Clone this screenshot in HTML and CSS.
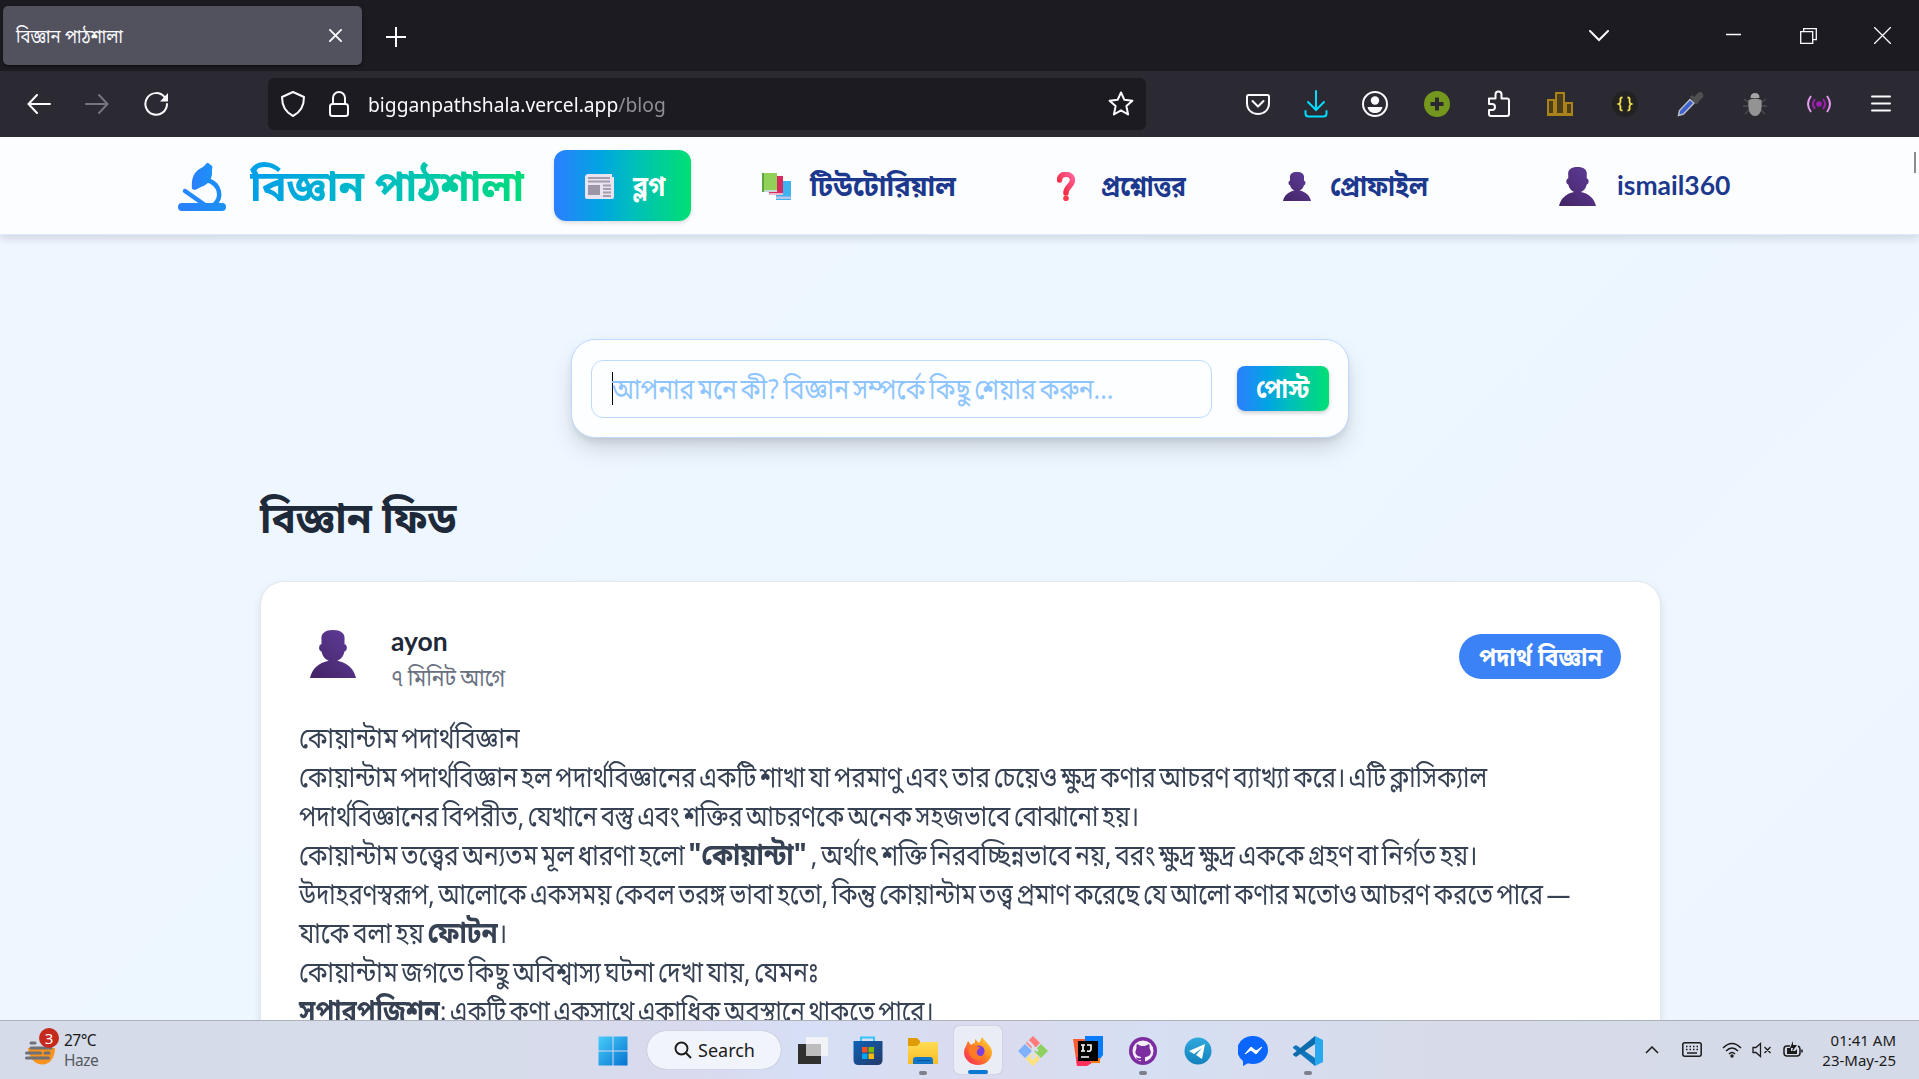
FILE: index.html
```html
<!DOCTYPE html>
<html lang="bn">
<head>
<meta charset="utf-8">
<title>বিজ্ঞান পাঠশালা</title>
<link rel="stylesheet" href="styles.css">
</head>
<body>
<svg class="defs" width="0" height="0">
  <defs>
    <linearGradient id="skin" x1="0" y1="1" x2="1" y2="0"><stop offset="0" stop-color="#432464"/><stop offset="1" stop-color="#613d9c"/></linearGradient>
    <linearGradient id="scope" x1="0" x2="1"><stop offset="0" stop-color="#2b7fff"/><stop offset="1" stop-color="#1b92f5"/></linearGradient>
    <linearGradient id="win" x1="0" y1="0" x2="1" y2="1"><stop offset="0" stop-color="#48cdfb"/><stop offset="1" stop-color="#0673d0"/></linearGradient>
    <linearGradient id="red" x1="0" y1="1" x2="1" y2="0"><stop offset="0" stop-color="#f0202f"/><stop offset="1" stop-color="#ff5f98"/></linearGradient>
    <linearGradient id="fold" x1="0" y1="0" x2="0" y2="1"><stop offset="0" stop-color="#ffdc55"/><stop offset="1" stop-color="#f9bd24"/></linearGradient>
    <linearGradient id="fox" x1="1" y1="0" x2="0" y2="1"><stop offset="0" stop-color="#ffe43b"/><stop offset=".45" stop-color="#ff8a20"/><stop offset="1" stop-color="#f6195f"/></linearGradient>
    <linearGradient id="store" x1="0" y1="0" x2="1" y2="1"><stop offset="0" stop-color="#0c62b8"/><stop offset="1" stop-color="#253a66"/></linearGradient>
    <linearGradient id="tele" x1="0" y1="0" x2="0" y2="1"><stop offset="0" stop-color="#2fa9dd"/><stop offset="1" stop-color="#1381bd"/></linearGradient>
    <symbol id="person" viewBox="0 0 44 47" preserveAspectRatio="none"><path d="M11 10C10 3 15 0 22 0s12 3 11 10v4c3 0 3 7 0 7-1 5-4 8-7 9 10 2 16 8 18 17H0c2-9 8-15 18-17-3-1-6-4-7-9-3 0-3-7 0-7z" fill="url(#skin)"/></symbol>
  </defs>
</svg>

<div class="tabs">
  <div class="tab"><span class="tab-name"><span class="fit">বিজ্ঞান পাঠশালা</span></span>
    <svg width="13" height="13" viewBox="0 0 14 14" class="ln"><path d="M1 1l12 12M13 1L1 13"/></svg></div>
  <svg class="ln plus" width="20" height="20" viewBox="0 0 20 20"><path d="M10 0v20M0 10h20"/></svg>
  <div class="win-btns">
    <svg class="ln" width="20" height="12" viewBox="0 0 20 12"><path d="M1 1l9 9 9-9"/></svg>
    <svg class="ln thin w-min" width="15" height="16" viewBox="0 0 15 16"><path d="M0 6.500h15"/></svg>
    <svg class="ln thin w-max" width="17" height="16" viewBox="0 0 17 16"><path d="M.7 3.700h12v11.600H.7zM3.700 3.500V.7h12.600v11h-3"/></svg>
    <svg class="ln thin w-cls" width="17" height="17" viewBox="0 0 17 17"><path d="M.5.500l16 16M16.500.500l-16 16"/></svg>
  </div>
</div>

<div class="toolbar">
  <svg class="ln b-back" width="24" height="20" viewBox="0 0 24 20"><path d="M23 10H2M10 1L1.500 10l8.500 9"/></svg>
  <svg class="ln dim b-fwd" width="24" height="20" viewBox="0 0 24 20"><path d="M1 10h21M14 1l8.500 9-8.500 9"/></svg>
  <svg class="ln b-rel" width="25" height="24" viewBox="0 0 25 24"><path d="M20.500 5A10.800 10.800 0 1 0 23 12"/><path d="M24 1v8.500h-8z" fill="#fbfbfe" stroke="none"/></svg>
  <div class="url">
    <svg class="ln" width="24" height="26" viewBox="0 0 24 26"><path d="M12 1L23 6c0 9-3 15-11 19C4 21 1 15 1 6z" stroke-linejoin="round"/></svg>
    <svg class="ln lock" width="20" height="26" viewBox="0 0 20 26"><rect x="1" y="13" width="18" height="12" rx="2.500"/><path d="M4 13V7a6 6 0 0 1 12 0v6"/></svg>
    <span class="addr fit">bigganpathshala.vercel.app<i>/blog</i></span>
    <svg class="ln star" width="26" height="26" viewBox="0 0 26 26"><path d="M13 1.500l3.400 7.300 8 .9-6 5.400 1.700 8.400-7.100-4.200-7.100 4.200 1.700-8.400-6-5.400 8-.9z" stroke-linejoin="round"/></svg>
  </div>
  <div class="tools">
    <svg class="ln" width="28" height="28" viewBox="0 0 28 28"><path d="M4.500 5h19q1.500 0 1.500 1.500V13c0 7-5 11-11 11S3 20 3 13V6.500Q3 5 4.500 5zM8.500 11l5.500 5.500 5.500-5.500" stroke-linejoin="round"/></svg>
    <svg class="ln cyan" width="28" height="28" viewBox="0 0 28 28"><path d="M14 1v18M6 12l8 8 8-8M3.500 21v2.500q0 3 3 3h15q3 0 3-3V21"/></svg>
    <svg class="ln" width="28" height="28" viewBox="0 0 28 28"><circle cx="14" cy="14" r="12"/><circle cx="14" cy="10.500" r="4.200" fill="#fbfbfe" stroke="none"/><path d="M6.500 17h15c-1 4.500-4 6-7.500 6s-6.500-1.500-7.500-6z" fill="#fbfbfe" stroke="none"/></svg>
    <svg width="28" height="28" viewBox="0 0 28 28"><circle cx="14" cy="14" r="13" fill="#74971d"/><path d="M14 7.500v13M7.500 14h13" stroke="#2b2a33" stroke-width="4"/></svg>
    <svg class="ln" width="28" height="28" viewBox="0 0 28 28"><path d="M4 8.500h6.500V4.500a3 3 0 0 1 6 0v4H22q2 0 2 2V24q0 2-2 2H6q-2 0-2-2v-4h3a3 3 0 0 0 0-6H4z" stroke-linejoin="round"/></svg>
    <svg width="28" height="28" viewBox="0 0 28 28" fill="#4c3d1c" stroke="#a9821a" stroke-width="2"><path d="M2 10h6v14H2zM10 3h8v21h-8zM20 13h6v11h-6zM1 25h26"/></svg>
    <svg width="28" height="28" viewBox="0 0 28 28"><circle cx="14" cy="14" r="13" fill="#222"/><path d="M11.500 7.500c-3 0-2 2-2 4s-1 2-2 2.500c1 .5 2 .5 2 2.500s-1 4 2 4M16.500 7.500c3 0 2 2 2 4s1 2 2 2.500c-1 .5-2 .5-2 2.500s1 4-2 4" fill="none" stroke="#f5e050" stroke-width="1.800"/></svg>
    <svg width="28" height="28" viewBox="0 0 28 28"><path d="M2.500 25.500l1-5L14 9.500l4 3.500L7.500 24z" fill="#3d5fd0" stroke="#b7bcc6" stroke-width="1.500"/><path d="M15 6l7 7M18 9l4.500-4.500q2-2 3 0t-1 3L20 12z" stroke="#505050" stroke-width="3" fill="#505050"/></svg>
    <svg width="28" height="28" viewBox="0 0 28 28"><path d="M3 9l4 3M25 9l-4 3M2 16h5M26 16h-5M4 24l4-4M24 24l-4-4" stroke="#4b4b4f" stroke-width="1.500"/><path d="M9.500 8q0-5 4.500-5t4.500 5z" fill="#a5a5a5"/><path d="M7.500 10q6.500-3 13 0c1 9-1 16-6.500 16S6.500 19 7.500 10z" fill="#939393"/></svg>
    <svg width="28" height="28" viewBox="0 0 28 28" fill="none" stroke-width="2"><circle cx="14" cy="14" r="2.800" fill="#a31db5"/><path d="M10 9q-4 5 0 10M18 9q4 5 0 10" stroke="#a31db5"/><path d="M6 6q-6 8 0 16M22 6q6 8 0 16" stroke="#e59bf0"/></svg>
    <svg class="ln" width="28" height="28" viewBox="0 0 28 28"><path d="M5 6.500h18M5 13.500h18M5 20.500h18"/></svg>
  </div>
</div>

<main class="page">
  <nav class="nav">
    <svg class="micro" width="48" height="48" viewBox="0 0 48 48" fill="url(#scope)"><rect y="40" width="48" height="8" rx="4"/><path d="M14 26c-1-11 2-18 11-22l3-3q1-2 3-.5l3 2.500q1 1 0 3v4c0 6-4 12-11 14l-6 3z"/><path d="M7 28l20 14" stroke="#2588fb" stroke-width="4.500" stroke-linecap="round"/><path d="M29 17c13 4 16 17 7 25" fill="none" stroke="#1f8df8" stroke-width="4.500"/></svg>
    <h1 class="brand"><span class="fit">বিজ্ঞান পাঠশালা</span></h1>
    <a class="item active"><svg width="29" height="26" viewBox="0 0 29 26"><path d="M2 1h25v3h2v20q0 2-2 2H2q-2 0-2-2V3z" fill="#e9e3f0"/><path d="M3 5h22M3 8.500h22M18 12.500h8M18 16h8M18 19.500h8M18 23h8" stroke="#a49dab" stroke-width="1.800"/><path d="M3 12h12v10H3z" fill="#9c95a5"/></svg><b class="fit">ব্লগ</b></a>
    <a class="item i2"><svg width="29" height="27" viewBox="0 0 29 27"><path d="M14 8h15v19H14z" fill="#3fb3ef"/><path d="M14 23.500h15V26H14z" fill="#b9c4ea"/><path d="M7 3h14v19H7z" fill="#d92a60"/><path d="M7 20h14v2H7z" fill="#edb6d0"/><path d="M0 0h15v19H0z" fill="#8fd257"/><path d="M0 17h15v2H0z" fill="#c5d8d6"/><path d="M0 0h2v19H0z" fill="#5ca642"/></svg><b class="fit">টিউটোরিয়াল</b></a>
    <a class="item i3"><svg width="18" height="29" viewBox="0 0 18 29"><path d="M2.500 8c0-8 13-7 13 0 0 6-6.500 6-6.500 13" fill="none" stroke="url(#red)" stroke-width="5.500" stroke-linecap="round"/><circle cx="9" cy="26.200" r="2.800" fill="#ff3a4b"/></svg><b class="fit">প্রশ্নোত্তর</b></a>
    <a class="item i4"><svg width="28" height="29"><use href="#person" width="28" height="29"/></svg><b class="fit">প্রোফাইল</b></a>
    <a class="item i5"><svg width="37" height="39"><use href="#person" width="37" height="39"/></svg><b class="fit">ismail360</b></a>
    <span class="thumb"></span>
  </nav>

  <section class="composer">
    <div class="field"><span class="fit">আপনার মনে কী? বিজ্ঞান সম্পর্কে কিছু শেয়ার করুন...</span></div>
    <a class="post"><b class="fit">পোস্ট</b></a>
  </section>

  <h2 class="feed"><span class="fit">বিজ্ঞান ফিড</span></h2>

  <article class="card">
    <header class="head">
      <svg width="46" height="48"><use href="#person" width="46" height="48"/></svg>
      <div class="who"><div class="name"><b class="fit">ayon</b></div><div class="ago"><span class="fit">৭ মিনিট আগে</span></div></div>
      <span class="badge"><b class="fit">পদার্থ বিজ্ঞান</b></span>
    </header>
    <div class="body">
      <p class="l1"><span class="fit">কোয়ান্টাম পদার্থবিজ্ঞান</span></p>
      <p class="l2"><span class="fit">কোয়ান্টাম পদার্থবিজ্ঞান হল পদার্থবিজ্ঞানের একটি শাখা যা পরমাণু এবং তার চেয়েও ক্ষুদ্র কণার আচরণ ব্যাখ্যা করে। এটি ক্লাসিক্যাল</span></p>
      <p class="l3"><span class="fit">পদার্থবিজ্ঞানের বিপরীত, যেখানে বস্তু এবং শক্তির আচরণকে অনেক সহজভাবে বোঝানো হয়।</span></p>
      <p class="l4"><span class="fit">কোয়ান্টাম তত্ত্বের অন্যতম মূল ধারণা হলো <b>"কোয়ান্টা"</b>, অর্থাৎ শক্তি নিরবচ্ছিন্নভাবে নয়, বরং ক্ষুদ্র ক্ষুদ্র এককে গ্রহণ বা নির্গত হয়।</span></p>
      <p class="l5"><span class="fit">উদাহরণস্বরূপ, আলোকে একসময় কেবল তরঙ্গ ভাবা হতো, কিন্তু কোয়ান্টাম তত্ত্ব প্রমাণ করেছে যে আলো কণার মতোও আচরণ করতে পারে —</span></p>
      <p class="l6"><span class="fit">যাকে বলা হয় <b>ফোটন</b>।</span></p>
      <p class="l7"><span class="fit">কোয়ান্টাম জগতে কিছু অবিশ্বাস্য ঘটনা দেখা যায়, যেমনঃ</span></p>
      <p class="l8"><span class="fit"><b>সুপারপজিশন</b>: একটি কণা একসাথে একাধিক অবস্থানে থাকতে পারে।</span></p>
    </div>
  </article>
</main>

<footer class="taskbar">
  <div class="weather">
    <svg width="30" height="30" viewBox="0 0 30 30"><path d="M3 13h27c0 22-25 22-27 0z" fill="#f7931e"/><path d="M6 8h4M6 13h20M1.500 18h14M20 18h4M1.500 23h22" stroke="#6e7178" stroke-width="3" stroke-linecap="round"/></svg>
    <span class="count">3</span>
    <div class="temp">27°C<br><i>Haze</i></div>
  </div>
  <div class="dock">
    <svg width="30" height="30" viewBox="0 0 30 30"><path d="M.5.500h14v14H.5zM15.500.500h14v14h-14zM.5 15.500h14v14H.5zM15.500 15.500h14v14h-14z" fill="url(#win)"/></svg>
    <div class="search"><svg width="18" height="18" viewBox="0 0 18 18" fill="none" stroke="#1b1b1b" stroke-width="1.900"><circle cx="7.500" cy="7.500" r="6"/><path d="M12 12l5 5"/></svg>Search</div>
    <svg width="30" height="30" viewBox="0 0 30 30"><path d="M0 8h23v20H0z" fill="#30302f"/><path d="M8 1h22v19H8z" fill="#f7f7f7" opacity=".85"/><path d="M8 8h15v12H8z" fill="#bdbdbd"/></svg>
    <svg width="30" height="30" viewBox="0 0 30 30"><path d="M8 7V1.500h13V7" fill="none" stroke="#36c5f4" stroke-width="2"/><path d="M.5 5h29v19q0 5-5 5h-19q-5 0-5-5z" fill="url(#store)"/><path d="M9 11h5.500v5.500H9z" fill="#f25022"/><path d="M15.500 11H21v5.500h-5.500z" fill="#7fba00"/><path d="M9 17.500h5.500V23H9z" fill="#00a4ef"/><path d="M15.500 17.500H21V23h-5.500z" fill="#ffb900"/></svg>
    <svg width="30" height="42" viewBox="0 0 30 42"><path d="M0 2h9l3 3v6H0z" fill="#e09b09"/><path d="M0 10h9l4-4h17v22H0z" fill="url(#fold)"/><path d="M5 28v-4q0-3 3-3h14q3 0 3 3v4z" fill="#0f76c8"/><path d="M9 24.500h13" stroke="#07519a"/><rect x="11" y="35" width="8" height="4" rx="2" fill="#7d808a"/></svg>
    <div class="tile"><svg width="28" height="42" viewBox="0 0 28 42"><path d="M2 10l2-5 3 4q2-2 4-2V3l4 4q2-3 3-6 2 3 5 6 5 5 5 9a14 13 0 0 1-28 0q0-3 2-6z" fill="url(#fox)"/><circle cx="15" cy="15" r="5.500" fill="#7a3ee0"/><path d="M5 11q4-3 7-1l5 2q-3 0-4 3-1 4 3 5 3 1 5-1-2 5-7 5-7-1-9-7z" fill="#ff7a24"/><rect x="4" y="34" width="20" height="4" rx="2" fill="#0b78d4"/></svg></div>
    <svg width="30" height="30" viewBox="0 0 30 30"><path d="M15 0l7 7-7 7-7-7z" fill="#ff7b7b"/><path d="M23 8l7 7-7 7-7-7z" fill="#8fd160"/><path d="M7 8l7 7-7 7-7-7z" fill="#7fb0fc"/><path d="M15 16l7 7-7 7-7-7z" fill="#ffe27a"/><path d="M10 5l5 5v12M15 11l5 4" stroke="#dbe0ee" stroke-width="2.500" fill="none"/><circle cx="15" cy="21" r="2.500" fill="#dbe0ee"/></svg>
    <svg width="30" height="30" viewBox="0 0 30 30"><path d="M0 3h14v22l-3 5H4z" fill="#fc5a30"/><path d="M4 30l-1-9h10l6 6-5 3z" fill="#fe315d"/><path d="M12 0h18v19l-3 4H12z" fill="#087cfa"/><path d="M18 22h9v5h-9z" fill="#f97a12"/><path d="M5 5h20v20H5z"/><path d="M8 21h8M8 9h4M10 9v6M8 15h4M14 9h4v4q0 3-4 2" stroke="#fff" stroke-width="1.600" fill="none"/></svg>
    <svg width="30" height="42" viewBox="0 0 30 42"><circle cx="15" cy="15" r="14" fill="#7c2d9f"/><circle cx="15" cy="15" r="10.500" fill="#f5eef8"/><path d="M9 8l4 2h4l4-2q1 2 .5 4 4 8-4.500 9v6h-4v-3q-4 1-5-3 2 2 5 1v-1q-8-1-4.500-9Q8 10 9 8z" fill="#7c2d9f"/><rect x="11" y="35" width="8" height="4" rx="2" fill="#7d808a"/></svg>
    <svg width="30" height="30" viewBox="0 0 30 30"><circle cx="15" cy="15" r="13.500" fill="url(#tele)"/><path d="M6 15l16-7-3 15-6-4 6-7-8 6z" fill="#fff"/></svg>
    <svg width="30" height="30" viewBox="0 0 30 30"><path d="M15 0a15 14 0 0 1 0 28q-3 0-5-.7L5 30v-5A15 14 0 0 1 15 0z" fill="#0a66ff"/><path d="M7 18l6-7 5 4 6-4-6 7-5-4z" fill="#fff" stroke="#fff" stroke-linejoin="round"/></svg>
    <svg width="30" height="42" viewBox="0 0 30 42"><path d="M0 11l3-2 19 13v8L0 12z" fill="#1177bd"/><path d="M0 19l3 2L22 8V0L0 18z" fill="#0d6cab"/><path d="M22 0l8 4v22l-8 4z" fill="#28a8ee"/><rect x="11" y="35" width="8" height="4" rx="2" fill="#7d808a"/></svg>
  </div>
  <div class="tray">
    <svg class="t1" width="14" height="8" viewBox="0 0 14 8"><path d="M1 7l6-6 6 6"/></svg>
    <svg class="t2" width="20" height="15" viewBox="0 0 20 15"><rect x=".8" y=".8" width="18.400" height="13.400" rx="2"/><path d="M4 4.500h13M4 7.500h13" stroke-dasharray="1.500 2"/><path d="M5 11h10"/></svg>
    <svg class="t3" width="20" height="16" viewBox="0 0 20 16"><path d="M1 6q9-9 18 0M4 9q6-6 12 0M7 12q3-3 6 0"/><circle cx="10" cy="14" r="1"/></svg>
    <svg class="t4" width="20" height="16" viewBox="0 0 20 16"><path d="M1 5.500h3l4.500-4v13l-4.500-4H1zM12.500 5l6 6M18.500 5l-6 6" stroke-width="1.300"/></svg>
    <svg class="t5" width="20" height="17" viewBox="0 0 20 17"><path d="M7 5H4Q1 5 1 8v4q0 3 3 3h10q3 0 3-3V8q0-2-2-3M19 8.500v3"/><path d="M4 7h4v3h4l2-2v5H4z" fill="#1b1b1b" stroke="none"/><path d="M10 0L7 7h3l-1 4 5-7h-4z" fill="#1b1b1b" stroke="none"/></svg>
    <div class="clock">01:41 AM<br>23-May-25</div>
  </div>
</footer>
</body>
</html>
```
FILE: styles.css
```css
* { box-sizing: border-box; }
html, body { margin: 0; height: 1079px; overflow: hidden; }
body { display: flex; flex-direction: column; font-family: "Noto Sans Bengali", "Noto Sans", "Open Sans", sans-serif; }
svg { display: block; flex: none; }
.defs { position: absolute; }
/* condensed text: --k is the horizontal factor, --dy the baseline shift */
.fit { display: inline-block; white-space: nowrap; transform-origin: 0 50%; transform: translateY(var(--dy, 0px)) scaleX(var(--k, 1)); }
i { font-style: normal; }
b { font-weight: 700; }
.ln { fill: none; stroke: #fbfbfe; stroke-width: 2; stroke-linecap: round; }
.ln.thin { stroke-width: 1.3; }
.ln.dim { stroke: #76757d; }
.ln.cyan { stroke: #00ddff; }

.tabs { height: 71px; flex: none; background: #1c1b22; display: flex; align-items: center; padding-left: 3px; }
.tab { width: 359px; height: 59px; border-radius: 5px; background: #52525e; box-shadow: 0 1px 3px #0009; display: flex; align-items: center; justify-content: space-between; padding: 0 20px 0 13px; color: #fbfbfe; font-size: 19px; --k: .88; --dy: 3px; }
.plus { margin: 2px 0 0 24px; }
.win-btns { margin-left: auto; display: flex; align-items: center; padding-right: 28px; }
.w-min { margin-left: 117px; }
.w-max { margin-left: 59px; }
.w-cls { margin-left: 57px; }

.toolbar { height: 66px; flex: none; background: #2b2a33; display: flex; align-items: center; padding-left: 27px; }
.b-fwd { margin-left: 34px; }
.b-rel { margin-left: 35px; }
.url { width: 878px; height: 52px; margin-left: 99px; border-radius: 6px; background: #1c1b22; display: flex; align-items: center; padding: 0 12px 0 13px; }
.lock { margin-left: 24px; }
.addr { margin-left: 19px; font: 20px "Noto Sans", sans-serif; color: #fbfbfe; --k: .962; }
.addr i { color: #8f8f98; }
.star { margin-left: auto; }
.tools { flex: 1; display: flex; padding-left: 98px; }
.tools svg + svg { margin-left: 34px; }
.tools svg:nth-child(2) { margin-left: 30px; }
.tools svg:nth-child(3) { margin-left: 31px; }
.tools svg:nth-child(6) { margin-left: 33px; }
.tools svg:nth-child(7), .tools svg:nth-child(8), .tools svg:nth-child(9) { margin-left: 37px; }
.tools svg:nth-child(10) { margin-left: 36px; }

.page { flex: 1; min-height: 0; overflow: hidden; background: linear-gradient(135deg, #eff6ff, #edf7ff 50%, #eef5ff); }
.nav { height: 98px; background: #fcfdff; border-bottom: 1px solid #dbeafe; box-shadow: 0 4px 8px #0000001f; display: flex; align-items: center; padding-left: 178px; position: relative; }
.micro { margin-top: 3px; }
.brand { margin: 0 0 0 24px; width: 304px; font-size: 43px; line-height: 60px; font-weight: 700; --k: .96; --dy: 5px; }
.brand .fit { background: linear-gradient(90deg, #009fea, #00bfc0 50%, #00dc7a); -webkit-background-clip: text; background-clip: text; color: transparent; }
.item { display: flex; align-items: center; gap: 19px; color: #1c398e; font-size: 28px; line-height: 40px; --dy: 2.5px; }
.active { width: 137px; height: 71px; border-radius: 12px; padding-left: 31px; color: #fff; background: linear-gradient(90deg, #2b7fff, #00a6e0 35%, #00bcbf 55%, #00df74); box-shadow: 0 2px 4px #0002; --k: .9; }
.i2 { margin-left: 71px; width: 295px; --k: .975; }
.i3 { width: 226px; gap: 26px; --k: .867; }
.i4 { width: 276px; --k: .9; }
.i5 { gap: 21px; font-family: Lato, sans-serif; font-size: 26.5px; --dy: -1px; }
.item svg { margin-top: 1px; }
.thumb { position: absolute; right: 3px; top: 15px; width: 2px; height: 21px; background: #8b8b8f; }

.composer { width: 778px; height: 99px; margin: 104px 0 0 571px; border: 1px solid #bedbff; border-radius: 24px; background: #fdfeff; box-shadow: 0 12px 24px -4px #0000002b, 0 4px 8px -2px #0000001a; display: flex; align-items: center; justify-content: space-between; padding: 0 19px; }
.field { width: 621px; height: 58px; border: 1px solid #bedbff; border-radius: 12px; padding-left: 20px; font-size: 28px; line-height: 56px; word-spacing: -3px; color: #8ec5ff; display: flex; position: relative; --k: .88; --dy: 3px; }
.field::before { content: ""; position: absolute; left: 20px; top: 11px; width: 1px; height: 33px; background: #000; }
.post { width: 92px; height: 45px; border-radius: 8px; background: linear-gradient(90deg, #2b7fff, #00a6e0 35%, #00bcbf 55%, #00df74); box-shadow: 0 2px 4px #0003; color: #fff; font-size: 27px; line-height: 45px; padding-left: 19px; --k: .86; --dy: 3px; }
.feed { margin: 48px 0 0 260px; height: 60px; line-height: 60px; font-size: 42px; font-weight: 700; color: #1e2939; --k: .963; --dy: 6px; }
.card { width: 1401px; height: 600px; margin: 35px 0 0 260px; border: 1px solid #e5e7eb; border-radius: 24px; background: #fff; box-shadow: 0 4px 8px #0000001a; }
.head { height: 130px; display: flex; padding: 48px 39px 0 49px; }
.who { margin-left: 35px; flex: 1; }
.name { font: 26.5px/30px Lato, sans-serif; color: #1e2939; margin-top: -4px; }
.ago { font-size: 24px; line-height: 36px; margin-top: 1px; word-spacing: -1.5px; color: #6a7282; --k: .88; --dy: 4.5px; }
.badge { width: 162px; height: 45px; margin-top: 4px; border-radius: 23px; background: #3b82f6; color: #fff; font-size: 25.5px; line-height: 45px; padding-left: 20px; --k: .908; --dy: 3px; }
.body { padding: 9px 0 0 38px; color: #364153; font-size: 28px; word-spacing: -3px; }
.body p { margin: 0; height: 39px; line-height: 39px; }
.body p b { font-size: 30px; line-height: 30px; }
.l1 { --k: .872; }
.l2 { --k: .863; }
.l3 { --k: .858; }
.l4 { --k: .871; }
.l4 b { margin-right: 5px; }
.l5 { --k: .854; }
.l6 { --k: .87; }
.l7 { --k: .873; }
.l8 { --k: .85; }

.taskbar { height: 59px; flex: none; border-top: 1px solid #aeb2bf; background: linear-gradient(90deg, #d5dbe8, #d6dcea 25%, #d9daee 36%, #d6dff6 42%, #dadbee 52%, #d6dff3 60%, #d7dbe9 75%, #d4dae7); display: flex; font-family: "Noto Sans", sans-serif; color: #1b1b1b; position: relative; }
.weather { width: 598px; padding: 14px 0 0 25px; display: flex; position: relative; }
.count { position: absolute; left: 39px; top: 7px; width: 20px; height: 20px; border-radius: 50%; background: #c42b1c; color: #fff; font-size: 15px; line-height: 20px; text-align: center; }
.temp { margin: -5px 0 0 9px; font-size: 15.5px; line-height: 20px; letter-spacing: -.5px; }
.temp i { color: #55585f; }
.dock { display: flex; padding-top: 15px; }
.dock > svg { margin-right: 25px; }
.dock > svg:first-child { margin-right: 19px; }
.search { width: 134px; height: 38px; margin: -5px 17px 0 0; border-radius: 19px; background: #f2f4fb; box-shadow: 0 0 1px #0005; display: flex; align-items: center; padding-left: 27px; gap: 6px; font-size: 18px; }
.tile { width: 48px; height: 48px; margin: -10px 16px 0 -9px; border-radius: 5px; background: #eaecf6; box-shadow: 0 0 1px #0005; padding: 10px 0 0 10px; }
.tray { flex: 1; display: flex; align-items: center; justify-content: flex-end; padding: 0 23px 1px 0; }
.tray svg { fill: none; stroke: #1b1b1b; stroke-width: 1.5; }
.t2 { margin-left: 23px; }
.t3 { margin-left: 20px; }
.t4 { margin-left: 10px; }
.t5 { margin-left: 11px; }
.clock { margin-left: 18px; width: 75px; text-align: right; font-size: 15px; line-height: 20px; white-space: nowrap; }
```
